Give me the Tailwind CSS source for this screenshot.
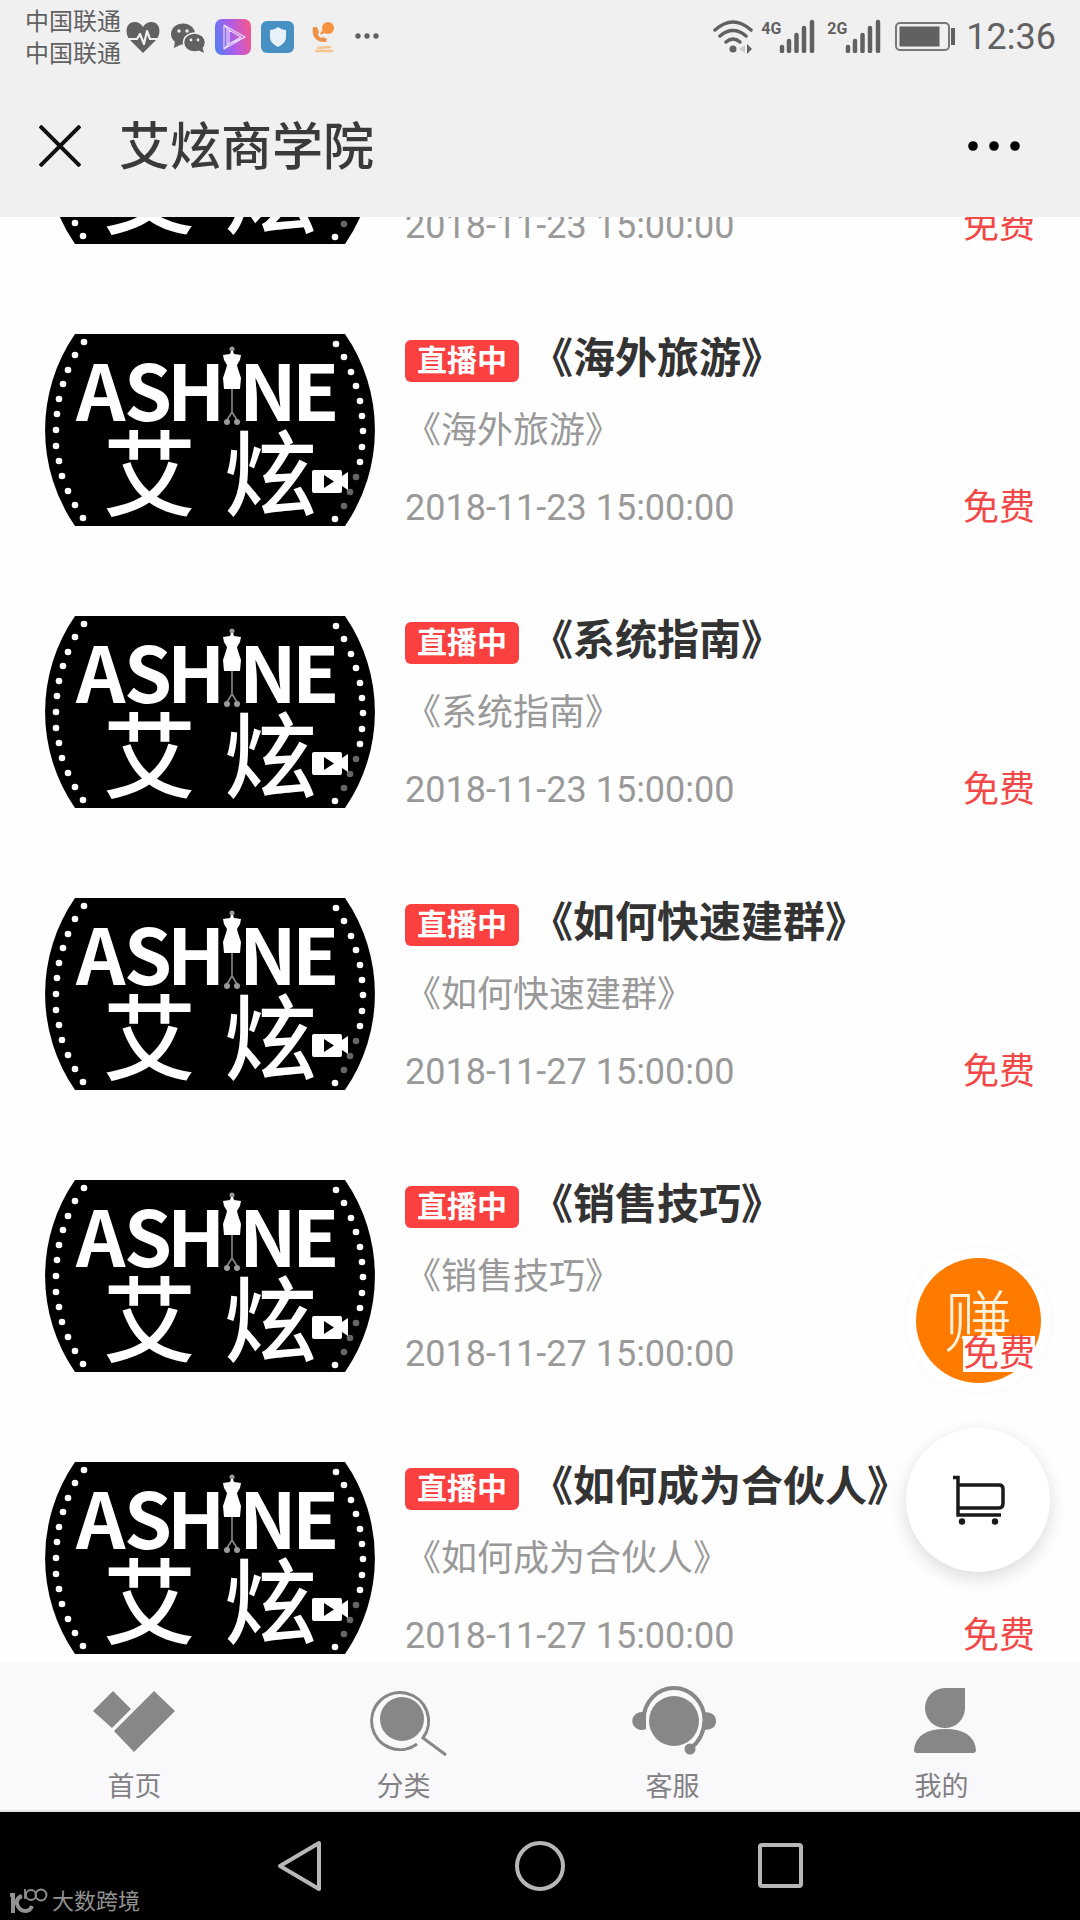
<!DOCTYPE html>
<html lang="zh-CN">
<head>
<meta charset="utf-8">
<meta name="viewport" content="width=device-width, initial-scale=1">
<title>艾炫商学院</title>
<script src="https://cdn.jsdelivr.net/npm/@tailwindcss/browser@4"></script>
</head>
<body class="flex h-screen flex-col overflow-hidden bg-white font-['Roboto','Noto_Sans_CJK_SC',sans-serif]">

<!-- Shared thumbnail artwork -->
<svg class="hidden" aria-hidden="true">
  <symbol id="cover" viewBox="0 0 330 192">
    <path d="M30 0H300A169 169 0 0 1 300 192H30A169 169 0 0 1 30 0Z" fill="#000"/>
    <g fill="#fff">
      <circle cx="39" cy="8" r="3.3"/><circle cx="30" cy="21" r="3.3"/><circle cx="23" cy="36" r="3.3"/><circle cx="18" cy="50" r="3.3"/><circle cx="14" cy="65" r="3.3"/><circle cx="12" cy="80" r="3.3"/><circle cx="11" cy="96" r="3.3"/><circle cx="11" cy="112" r="3.3"/><circle cx="14" cy="127" r="3.3"/><circle cx="17" cy="142" r="3.3"/><circle cx="23" cy="157" r="3.3"/><circle cx="30" cy="171" r="3.3"/><circle cx="38" cy="184" r="3.3"/>
      <circle cx="291" cy="10" r="3.3"/><circle cx="299" cy="23" r="3.3"/><circle cx="306" cy="38" r="3.3"/><circle cx="311" cy="52" r="3.3"/><circle cx="315" cy="67" r="3.3"/><circle cx="317" cy="82" r="3.3"/><circle cx="318" cy="97" r="3.3"/><circle cx="317" cy="113" r="3.3"/><circle cx="315" cy="128" r="3.3"/><circle cx="290" cy="185" r="3.3"/>
    </g>
    <g fill="#666"><circle cx="311" cy="143" r="3.3"/><circle cx="305" cy="158" r="3.3"/><circle cx="299" cy="172" r="3.3"/></g>
    <g fill="#fff" font-family="Noto Sans CJK SC, sans-serif">
      <text x="31 79 122" y="87" font-weight="700" font-size="77">ASH</text>
      <text x="194 247" y="87" font-weight="700" font-size="77">NE</text>
      <text x="58" y="175" font-weight="500" font-size="93">艾</text>
      <text x="179" y="175" font-weight="500" font-size="93">炫</text>
    </g>
    <circle cx="187" cy="15" r="2.5" fill="#999"/>
    <path d="M186 17h2l1 3 7 1-1 5-3 5 1 4 3 9-1 11h-16l-1-11 3-9 1-4-3-5-1-5 7-1Z" fill="#fff"/>
    <path d="M187 55v23M187 78l-5 8M187 78l5 8" stroke="#888" stroke-width="1.6" fill="none"/>
    <circle cx="182" cy="88" r="3" fill="#999"/><circle cx="192" cy="88" r="3" fill="#999"/>
    <path d="M269 136h26q2 0 2 2v4l6-4v18l-6-4v5q0 2-2 2h-26q-2 0-2-2v-19q0-2 2-2Z" fill="#fff"/>
    <path d="M279 141v13l10-6.500Z" fill="#000"/>
  </symbol>
  <symbol id="bars" viewBox="0 0 36 34">
    <path d="M3 28v4M10 22v10M17.500 16v16M25 9v23M33 3v29" stroke="#616161" stroke-width="4.500" stroke-linecap="round"/>
  </symbol>
</svg>

<header class="shrink-0 bg-[#f1f0f1]">
  <div class="flex h-[74px] items-center justify-between pr-6 pl-[25px] text-[#616161]">
    <div class="flex items-center gap-[9px]">
      <div class="-mr-[5px] pt-0.5 text-2xl leading-8">
        <p>中国联通</p>
        <p>中国联通</p>
      </div>
      <svg class="size-9" viewBox="0 0 36 36"><path d="M18 34 5 21C-1 14 1 3 9.500 3c4 0 7 2 8.500 5C19.500 5 22.500 3 26.500 3 35 3 37 14 31 21Z" fill="#616161"/><path d="M1 20h11l3-5 4 10 3-13 3 8h10" fill="none" stroke="#f1f0f1" stroke-width="2.200" stroke-linejoin="round"/></svg>
      <svg class="size-9" viewBox="0 0 36 36"><ellipse cx="13" cy="15" rx="12" ry="10.500" fill="#616161"/><path d="M5 22l-1 7 8-4Z" fill="#616161"/><ellipse cx="24.500" cy="23.500" rx="11" ry="9.500" fill="#616161" stroke="#f1f0f1" stroke-width="1.500"/><path d="M28 31l6 3-2-7Z" fill="#616161"/><g fill="#f1f0f1"><circle cx="9" cy="12" r="1.700"/><circle cx="17" cy="12" r="1.700"/><circle cx="21" cy="21" r="1.400"/><circle cx="28" cy="21" r="1.400"/></g></svg>
      <svg class="size-9" viewBox="0 0 36 36"><defs><linearGradient id="vg" x1="0" y1=".6" x2="1" y2=".4"><stop offset="0" stop-color="#5a7cf6"/><stop offset=".5" stop-color="#b35ce6"/><stop offset="1" stop-color="#f4588f"/></linearGradient></defs><rect width="36" height="36" rx="7" fill="url(#vg)"/><path d="M9 6 30 18 9 30ZM9 6l5 5v14l-5 5M14 11l12 7M14 25l16-7M12 9v17l14-8" fill="none" stroke="#e5d8ff" stroke-width="1.200" stroke-linejoin="round"/></svg>
      <svg class="size-9" viewBox="0 0 36 36"><rect x="1" y="2" width="33" height="32" rx="6" fill="#4690c4"/><path d="M18 8c3 2 5 3 8 3v7c0 5-3 7-8 10-5-3-8-5-8-10v-7c3 0 5-1 8-3Z" fill="#e6f1f8"/></svg>
      <svg class="size-9" viewBox="0 0 36 36"><circle cx="23" cy="9" r="6" fill="#f5913f"/><path d="M17 11l-2 5 5-2Z" fill="#f5913f"/><path d="M8 8c-2 10 4 16 13 15l1-3-4-2-2 1c-2-1-3-3-3-4l1-2-2-5Z" fill="#f0914a"/><path d="M12 29l14-1M10 32h18" stroke="#f6c48f" stroke-width="2.500"/></svg>
      <svg class="size-9" viewBox="0 0 36 36" fill="#616161"><circle cx="8" cy="17" r="2.700"/><circle cx="17" cy="17" r="2.700"/><circle cx="26" cy="17" r="2.700"/></svg>
    </div>
    <div class="flex items-center">
      <svg class="mr-2 h-9 w-10" viewBox="0 0 40 36" fill="none" stroke="#616161" stroke-width="3.500" stroke-linecap="round"><path d="M2 11Q20-5 38 11M7 17q13-11 26 0M13 23q7-6 14 0"/><circle cx="20" cy="30" r="3.500" fill="#616161" stroke="none"/><path d="M26 30l6-4v8Z" fill="#ccc" stroke="none"/><path d="M34 25v10l5-5Z" fill="#616161" stroke="none"/></svg>
      <div class="mr-3 flex h-9 items-start"><span class="w-[18px] text-base leading-5 font-bold">4G</span><svg class="h-[34px] w-9"><use href="#bars"/></svg></div>
      <div class="mr-3.5 flex h-9 items-start"><span class="w-[18px] text-base leading-5 font-bold">2G</span><svg class="h-[34px] w-9"><use href="#bars"/></svg></div>
      <svg class="mr-[11px] h-8 w-[60px]" viewBox="0 0 60 32"><rect x="1" y="2" width="53" height="27" rx="4" fill="none" stroke="#777" stroke-width="2"/><rect x="4.500" y="5.500" width="40" height="20" fill="#616161"/><path d="M58 7v17" stroke="#616161" stroke-width="4"/></svg>
      <time class="text-4xl leading-10">12:36</time>
    </div>
  </div>
  <div class="flex h-[143px] items-center pr-[60px] pl-[39px]">
    <button type="button" aria-label="关闭" class="mr-[38px]"><svg class="size-[42px]" viewBox="0 0 42 42"><path d="M1 1 41 41M41 1 1 41" stroke="#111" stroke-width="4"/></svg></button>
    <h1 class="flex-1 pt-1 text-[51px] leading-[60px] font-medium text-[#3a3a3a]">艾炫商学院</h1>
    <button type="button" aria-label="更多"><svg class="h-6 w-[52px]" viewBox="0 0 52 24"><circle cx="5" cy="12" r="4.800"/><circle cx="26" cy="12" r="4.800"/><circle cx="47" cy="12" r="4.800"/></svg></button>
  </div>
</header>

<main class="relative min-h-0 flex-1 overflow-hidden bg-[#fefefe]">
  <!-- The list is shown scrolled part-way through its first entry -->
  <ul id="lessons" class="-mt-[210px]"></ul>

  <div class="absolute right-[30px] bottom-[91px] flex flex-col gap-9">
    <button type="button" class="z-10 flex size-36 items-center justify-center rounded-full bg-white/80 shadow-[0_0_8px_rgba(0,0,0,0.03)]">
      <span class="flex size-[125px] items-center justify-center rounded-full bg-[#ff7b00] pb-1 font-['Noto_Sans_CJK_SC',sans-serif] text-[68px] leading-none font-light text-[#fff3e0]">赚</span>
    </button>
    <button type="button" aria-label="购物车" class="z-10 flex size-36 items-center justify-center rounded-full bg-white shadow-[0_6px_18px_rgba(0,0,0,0.14)]">
      <svg class="h-[50px] w-14" viewBox="0 0 56 50" fill="none" stroke="#1a1a1a" stroke-width="3.500"><path d="M3 2.500h5V40h43M8 10h41q4 0 4 4v14q0 5-4 5H8"/><circle cx="12" cy="46.500" r="3.200" fill="#1a1a1a" stroke="none"/><circle cx="45" cy="46.500" r="3.200" fill="#1a1a1a" stroke="none"/></svg>
    </button>
  </div>
</main>

<nav class="grid h-[149px] shrink-0 grid-cols-4 border-b-2 border-[#e4e3e6] bg-[#f9f8fa] pt-5 pr-1 text-[27px] leading-9 text-[#828083]">
  <a href="#" class="flex flex-col items-center gap-2">
    <svg class="h-[78px] w-[86px]" viewBox="0 0 86 78" fill="#888688"><path d="M21 8 39 26 20 45 1 28ZM62 8 83 28 42 69 22 48Z"/></svg>
    <span>首页</span>
  </a>
  <a href="#" class="flex flex-col items-center gap-2">
    <svg class="h-[78px] w-[86px]" viewBox="0 0 86 78" fill="none" stroke="#888688"><circle cx="41" cy="36" r="22" fill="#888688" stroke="none"/><path d="M56 61A28.500 28.500 0 1 1 62 55L85 72" stroke-width="3"/></svg>
    <span>分类</span>
  </a>
  <a href="#" class="flex flex-col items-center gap-2">
    <svg class="h-[78px] w-[90px]" viewBox="0 0 90 78" fill="#888688"><circle cx="46" cy="38" r="25"/><path d="M15.500 37A30.500 32 0 0 1 76.500 37Q76 55 63 65" fill="none" stroke="#888688" stroke-width="4"/><path d="M18 28v18A9.500 9 0 1 1 15 29ZM75 29q13 0 13 9 0 9-13 9Z"/><circle cx="62" cy="66" r="5.500"/></svg>
    <span>客服</span>
  </a>
  <a href="#" class="flex flex-col items-center gap-2">
    <svg class="h-[78px] w-[86px]" viewBox="0 0 86 78" fill="#888688"><path d="M46 5H66V25A20 20 0 1 1 46 5ZM18 70q-3 0-3-3 2-21 31-21t31 21q0 3-3 3Z"/></svg>
    <span>我的</span>
  </a>
</nav>

<footer class="relative flex h-[108px] shrink-0 items-center justify-center gap-[180px] bg-black">
  <button type="button" aria-label="返回"><svg class="size-[60px]" viewBox="0 0 60 60" fill="none" stroke="#b8b6b8" stroke-width="4" stroke-linejoin="round"><path d="M10 30 49 7V53Z"/></svg></button>
  <button type="button" aria-label="主屏幕"><svg class="size-[60px]" viewBox="0 0 60 60" fill="none" stroke="#b8b6b8" stroke-width="4"><circle cx="30" cy="30" r="23"/></svg></button>
  <button type="button" aria-label="最近任务"><svg class="size-[60px]" viewBox="0 0 60 60" fill="none" stroke="#b8b6b8" stroke-width="4"><rect x="10" y="9" width="41" height="41" rx="2"/></svg></button>
  <div class="absolute bottom-1 left-2 flex items-center gap-1 text-[22px] leading-6 text-[#929292]">
    <svg class="h-7 w-10" viewBox="0 0 40 28" fill="none" stroke="#929292"><path d="M2 7h3v18" stroke-width="4"/><path d="M14 8Q8 10 9 16q2 7 9 7 4 0 6-5" stroke-width="4"/><path d="M17 1v10" stroke-width="1.800"/><circle cx="23" cy="7" r="5" stroke-width="1.800"/><circle cx="33" cy="7" r="5.500" stroke-width="1.800"/></svg>
    <span>大数跨境</span>
  </div>
</footer>

<script>
  const lessons = [
    { time: '2018-11-23 15:00:00' },
    { title: '《海外旅游》', time: '2018-11-23 15:00:00' },
    { title: '《系统指南》', time: '2018-11-23 15:00:00' },
    { title: '《如何快速建群》', time: '2018-11-27 15:00:00' },
    { title: '《销售技巧》', time: '2018-11-27 15:00:00' },
    { title: '《如何成为合伙人》', time: '2018-11-27 15:00:00' }
  ];
  const heading = (title) => `
    <div class="flex h-[50px] items-center gap-3">
      <span class="mt-1 h-[42px] rounded-md bg-[#fb4040] px-3 text-[30px] leading-[42px] font-bold text-white">直播中</span>
      <h2 class="text-[42px] leading-[46px] font-bold whitespace-nowrap text-[#333]">${title}</h2>
    </div>
    <p class="mt-6 text-4xl leading-[46px] text-[#999]">${title}</p>`;
  document.getElementById('lessons').innerHTML = lessons.map(({ title, time }) => `
    <li>
      <a href="#" class="flex gap-[30px] p-[45px]">
        <svg class="h-48 w-[330px] shrink-0" role="img" aria-label="ASHINE 艾炫"><use href="#cover"/></svg>
        <div class="flex min-w-0 flex-1 flex-col">
          ${title ? heading(title) : ''}
          <div class="mt-auto flex items-center justify-between text-4xl leading-9">
            <time class="text-[#999]">${time}</time>
            <span class="relative z-20 bg-white text-[#f24848]">免费</span>
          </div>
        </div>
      </a>
    </li>`).join('');
</script>
</body>
</html>
